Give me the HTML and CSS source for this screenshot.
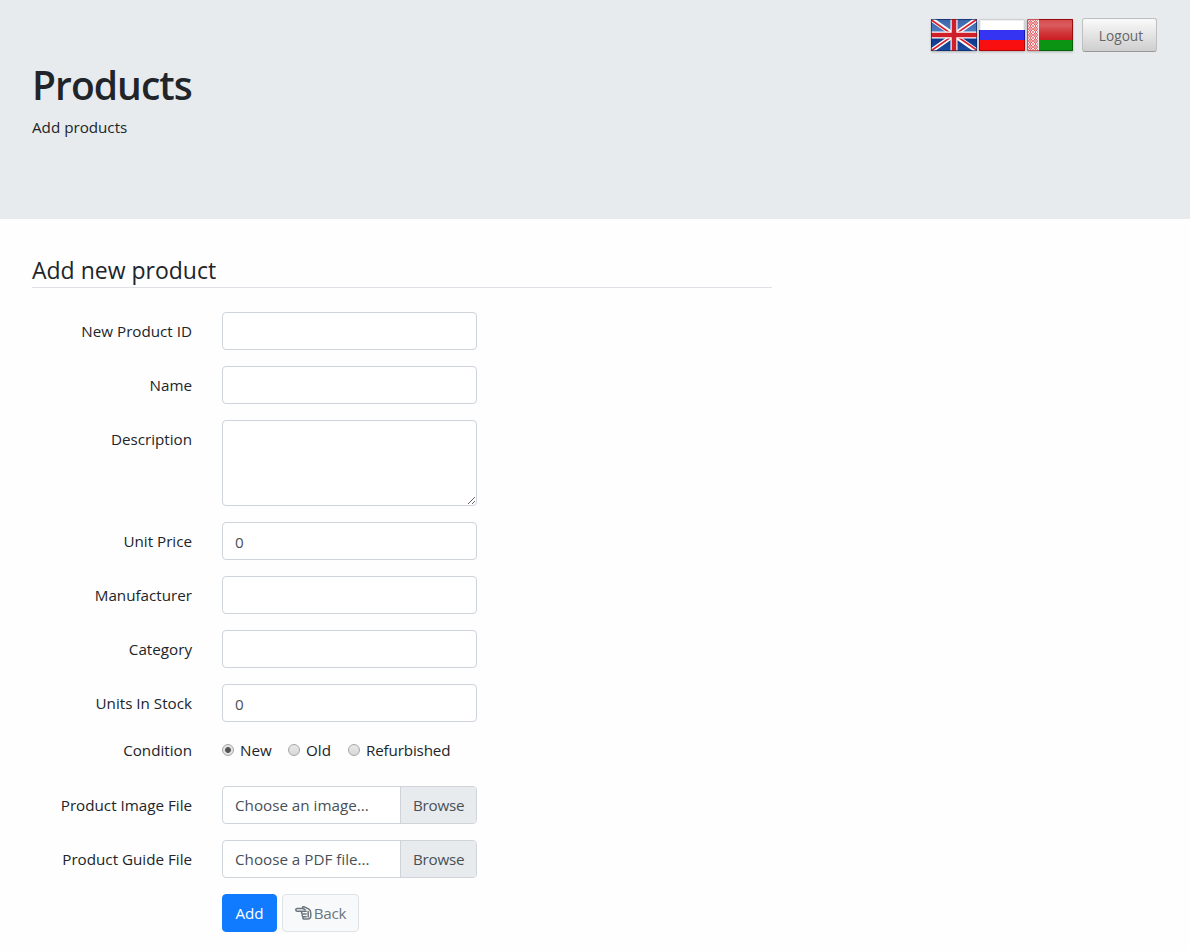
FILE: index.html
```html
<!DOCTYPE html>
<html lang="en">
<head>
<meta charset="utf-8">
<title>Products</title>
<link rel="stylesheet" href="styles.css">
</head>
<body>
<header class="hero">
  <div class="toolbar">
    <div class="flags">
      <svg class="flag" viewBox="0 0 46 32" role="img" aria-label="English">
        <defs>
          <linearGradient id="gloss" x1="0" y1="0" x2="0" y2="1"><stop offset="0" stop-color="#fff" stop-opacity=".2"/><stop offset=".3" stop-color="#fff" stop-opacity=".28"/><stop offset=".64" stop-color="#fff" stop-opacity=".12"/><stop offset="1" stop-color="#fff" stop-opacity="0"/></linearGradient>
          <linearGradient id="sea" x1="0" y1="0" x2="0" y2="1"><stop offset="0" stop-color="#3b64a8"/><stop offset=".48" stop-color="#5480c4"/><stop offset=".52" stop-color="#0b3287"/><stop offset="1" stop-color="#1c4da0"/></linearGradient>
        </defs>
        <rect width="46" height="32" fill="url(#sea)"/>
        <path d="M0 0L46 32M46 0L0 32" stroke="#fff" stroke-width="4.6"/>
        <path d="M0 .8L23 16.8M46 .1L23 16.1M23 15.2L46 31.2M23 15.9L0 31.9" stroke="#d8202c" stroke-width="1.7"/>
        <path d="M23 0V32M0 16H46" stroke="#fff" stroke-width="7"/>
        <path d="M23 0V32M0 16H46" stroke="#cf2029" stroke-width="4.6"/>
        <rect x=".5" y=".5" width="45" height="31" fill="none" stroke="#07235e" stroke-opacity=".65"/>
        <path d="M20.7 .5H25.3M20.7 31.5H25.3M.5 14V18M45.5 14V18" stroke="#a3101c"/>
      </svg>
      <svg class="flag" viewBox="0 0 46 32" role="img" aria-label="Russian">
        <rect width="46" height="11" fill="#fff"/>
        <rect y="11" width="46" height="10" fill="#3434f2"/>
        <rect y="21" width="46" height="11" fill="#f90f0f"/>
        <path d="M.5 11V.5H45.5V11" fill="none" stroke="#d2d2d2"/>
        <path d="M.5 11V21M45.5 11V21" stroke="#1616b4"/>
        <path d="M.5 21V31.5H45.5V21" fill="none" stroke="#b00505"/>
        <path d="M1.5 11V1.5H44.5V11" fill="none" stroke="#eee"/>
      </svg>
      <svg class="flag" viewBox="0 0 46 32" role="img" aria-label="Belarusian">
        <defs>
          <pattern id="ornament" width="5" height="6" patternUnits="userSpaceOnUse" x="1" y="1"><path d="M2.5 .5L4.5 3L2.5 5.5L.5 3ZM0 0h1M4 0h1M0 6h1M4 6h1M2 3h1" fill="none" stroke="#d93840"/></pattern>
        </defs>
        <rect width="46" height="21" fill="#cb1c20"/>
        <rect y="21" width="46" height="11" fill="#0b9414"/>
        <rect width="12" height="32" fill="#fce9e9"/>
        <rect width="11" height="32" fill="url(#ornament)"/>
        <rect x="12" width="34" height="21" fill="url(#gloss)"/>
        <path d="M12 .5H45.5V21" fill="none" stroke="#970c0f"/>
        <path d="M45.5 21V31.5H12" fill="none" stroke="#06620b"/>
        <path d="M12 .5H.5V31.5H12" fill="none" stroke="#c9545a"/>
      </svg>
    </div>
    <button class="logout" type="button">Logout</button>
  </div>
  <h1 class="title">Products</h1>
  <p class="subtitle">Add products</p>
</header>
<main class="content">
  <form class="product-form">
    <h2 class="legend">Add new product</h2>
    <div class="row"><label class="label" for="pid">New Product ID</label><input class="control" id="pid" type="text"></div>
    <div class="row"><label class="label" for="name">Name</label><input class="control" id="name" type="text"></div>
    <div class="row"><label class="label" for="desc">Description</label><textarea class="control area" id="desc"></textarea></div>
    <div class="row"><label class="label" for="price">Unit Price</label><input class="control" id="price" type="text" value="0"></div>
    <div class="row"><label class="label" for="maker">Manufacturer</label><input class="control" id="maker" type="text"></div>
    <div class="row"><label class="label" for="cat">Category</label><input class="control" id="cat" type="text"></div>
    <div class="row"><label class="label" for="stock">Units In Stock</label><input class="control" id="stock" type="text" value="0"></div>
    <div class="row condition">
      <span class="label">Condition</span>
      <div class="radios">
        <label class="choice new"><input class="radio" type="radio" name="condition" checked><span>New</span></label>
        <label class="choice old"><input class="radio" type="radio" name="condition"><span>Old</span></label>
        <label class="choice refurbished"><input class="radio" type="radio" name="condition"><span>Refurbished</span></label>
      </div>
    </div>
    <div class="row"><span class="label">Product Image File</span><div class="file"><span class="file-name">Choose an image...</span><span class="browse">Browse</span></div></div>
    <div class="row"><span class="label">Product Guide File</span><div class="file"><span class="file-name">Choose a PDF file...</span><span class="browse">Browse</span></div></div>
    <div class="actions">
      <button class="btn primary" type="submit">Add</button>
      <button class="btn light" type="button"><svg class="hand" viewBox="0 0 17 14" aria-hidden="true"><path d="M8 5.2H2.2C.3 5.2.3 2.5 2.2 2.5H8.2L7.6 1.6C7.4.6 8.6.3 9.4.8L13.8 3.2C15.3 4 15.8 5.2 15.8 7.4V9.4C15.8 12 14.6 13 12.4 13H9C7.6 13 7.5 11.3 8.6 11M8.2 2.5L10 3.6M8 5.3H11.2M7.4 5.4C6.2 5.7 6.2 7.8 7.6 8H11.2M7.8 8.2C6.8 8.7 7 10.6 8.4 10.8H11.2M13.2 5.5V11" fill="none" stroke="currentColor" stroke-width="1.5" stroke-linecap="round" stroke-linejoin="round"/></svg><span>Back</span></button>
    </div>
  </form>
</main>
</body>
</html>
```

FILE: styles.css
```css
* { box-sizing: border-box; }
body {
  margin: 0;
  background: #fefefe;
  color: #212529;
  font: 15.2px/24px "Open Sans", "Noto Sans", sans-serif;
}
.hero { height: 219px; padding: 18px 33px 0 32px; background: #e7ebee; }
.toolbar { display: flex; justify-content: flex-end; gap: 9px; height: 34px; }
.flags { display: flex; gap: 2px; padding-top: 1px; }
.flag { display: block; width: 46px; height: 32px; filter: drop-shadow(0 1px 1px rgba(0, 0, 0, .25)); }
.logout {
  width: 75px; height: 34px; padding: 1px 0 0 3px;
  border: 1px solid #bfbfbf; border-bottom-color: #999; border-radius: 3px;
  background: linear-gradient(#fafafa, #cecece);
  color: #666; font: 13.7px "Open Sans", sans-serif;
}
.title { margin: 9px 0 6px; font-size: 39px; line-height: 48px; font-weight: 600; letter-spacing: -0.95px; }
.subtitle { margin: 0; }
.content { padding: 38px 32px 0; }
.product-form { width: 740px; }
.legend {
  height: 31px; margin: 0 0 24px; border-bottom: 1px solid #dee2e6;
  font-size: 23px; line-height: 26px; font-weight: 400;
}
.row { display: flex; gap: 30px; margin-bottom: 16px; }
.label { width: 160px; padding-top: 7px; text-align: right; white-space: nowrap; }
.control {
  display: block; width: 255px; height: 38px; margin: 0; padding: 8px 12px 6px;
  border: 1px solid #ced4da; border-radius: 4px; outline: none;
  background: #fff; color: #495057; font: inherit;
}
.area { height: 86px; resize: both; }
.condition { height: 32px; }
.condition .label { padding-top: 0; }
.radios { display: flex; height: 24px; }
.choice { display: flex; align-items: center; gap: 6px; white-space: nowrap; }
.new { width: 66px; }
.old { width: 60px; }
.refurbished { letter-spacing: -0.15px; }
.radio {
  appearance: none; width: 12px; height: 12px; margin: 0;
  border: 1px solid #a6a6a6; border-radius: 50%;
  background: linear-gradient(#e8e8e8, #d8d8d8);
}
.radio:checked { background: radial-gradient(circle, #555 0 2.5px, #e3e3e3 3.3px); }
.file {
  display: flex; width: 255px; height: 38px; overflow: hidden;
  border: 1px solid #ced4da; border-radius: 4px; background: #fff; color: #495057;
}
.file-name { flex: 1; padding: 6px 12px; white-space: nowrap; }
.browse { width: 76px; padding: 6px 0 6px 12px; border-left: 1px solid #ced4da; background: #e7ebee; letter-spacing: -0.25px; }
.actions { display: flex; gap: 5px; padding-left: 190px; }
.btn {
  display: flex; align-items: center; justify-content: center;
  height: 38px; padding: 0; border: 1px solid; border-radius: 4px; font: inherit;
}
.primary { width: 55px; border-color: #117bff; background: #117bff; color: #fff; }
.light { width: 77px; gap: 2px; border-color: #dfe2e6; background: #f7f9fa; color: #6c757d; letter-spacing: -0.2px; }
.hand { width: 17px; height: 14px; }
```
